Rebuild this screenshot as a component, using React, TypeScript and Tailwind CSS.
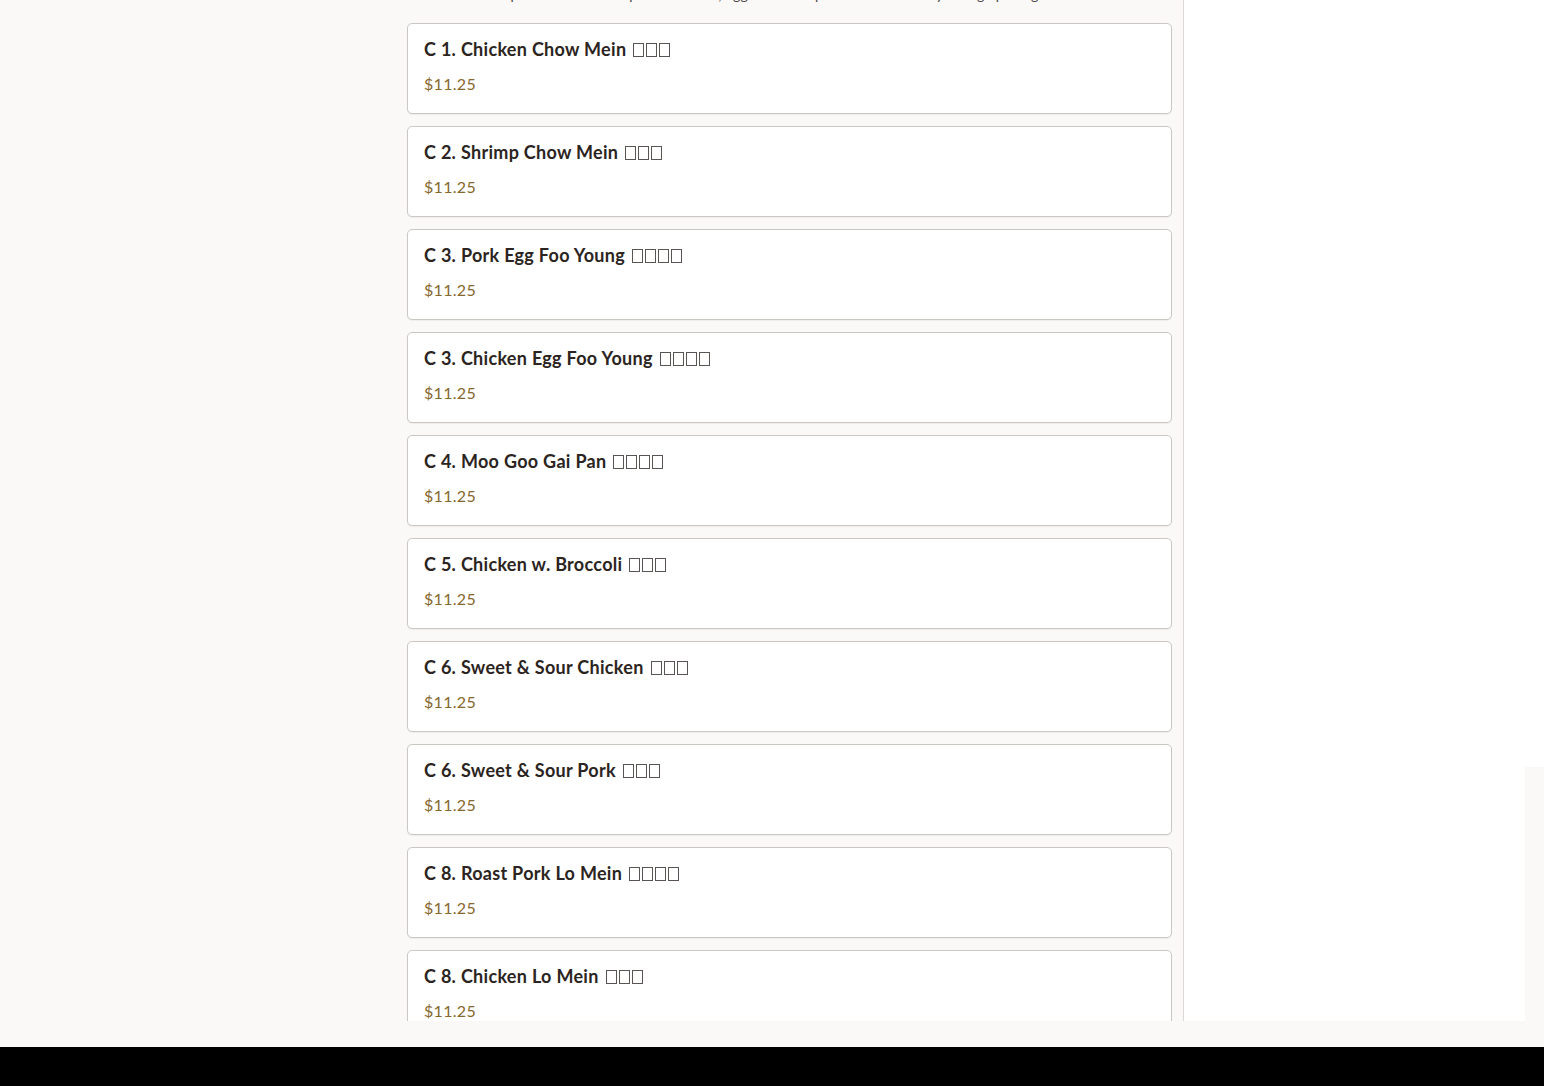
import React from "react";

const ITEMS = [
  { code: "C 1.", name: "Chicken Chow Mein", zh: 3 },
  { code: "C 2.", name: "Shrimp Chow Mein", zh: 3 },
  { code: "C 3.", name: "Pork Egg Foo Young", zh: 4 },
  { code: "C 3.", name: "Chicken Egg Foo Young", zh: 4 },
  { code: "C 4.", name: "Moo Goo Gai Pan", zh: 4 },
  { code: "C 5.", name: "Chicken w. Broccoli", zh: 3 },
  { code: "C 6.", name: "Sweet & Sour Chicken", zh: 3 },
  { code: "C 6.", name: "Sweet & Sour Pork", zh: 3 },
  { code: "C 8.", name: "Roast Pork Lo Mein", zh: 4 },
  { code: "C 8.", name: "Chicken Lo Mein", zh: 3 },
];

// missing-glyph boxes, as the browser drew the Chinese names
function Tofu({ count }: { count: number }) {
  return (
    <span className="ml-[7px] inline-flex gap-[2px] align-[-1px]">
      {Array.from({ length: count }).map((_, i) => (
        <span key={i} className="inline-block h-[14px] w-[11px] border border-[#5a5552]" />
      ))}
    </span>
  );
}

function MenuCard({ item }: { item: (typeof ITEMS)[number] }) {
  return (
    <div className="h-[91px] shrink-0 rounded-[5px] border border-[#cbc8c3] bg-white px-4 pt-[11px] shadow-[0_1px_1px_rgba(0,0,0,0.05)]">
      <h3 className="text-[18px] font-bold leading-[28px] tracking-[0.3px] text-[#2b2421]">
        {item.code} {item.name}
        <Tofu count={item.zh} />
      </h3>
      <p className="mt-[9px] text-[16px] leading-6 tracking-[0.3px] text-[#86672c]">$11.25</p>
    </div>
  );
}

export default function App() {
  return (
    <div className="flex h-[1086px] flex-col bg-[#faf9f7] font-['Lato','Noto_Sans',sans-serif]">
      <div className="flex h-[1021px] overflow-hidden">
        <div className="w-[395px] shrink-0" />

        {/* Menu column */}
        <main className="w-[789px] shrink-0 overflow-hidden border-r border-[#dcd9d5] pl-3 pr-[11px]">
          <p className="-mt-[15px] h-5 whitespace-nowrap pl-px text-sm leading-5 tracking-[0.2px] text-[#4a4542]">
            All combination plates served with pork fried rice, egg roll or soup. Substitutions may change pricing.
          </p>
          <div className="mt-[18px] flex flex-col gap-3">
            {ITEMS.map((item, i) => (
              <MenuCard key={i} item={item} />
            ))}
          </div>
        </main>

        {/* Side panel */}
        <aside className="flex flex-1 flex-col bg-white">
          <div className="h-[767px]" />
          <div className="flex flex-1">
            <div className="flex-1" />
            <div className="w-[19px] bg-[#faf9f7]" />
          </div>
        </aside>
      </div>
      <div className="h-[26px]" />
      <div className="flex-1 bg-black" />
    </div>
  );
}
